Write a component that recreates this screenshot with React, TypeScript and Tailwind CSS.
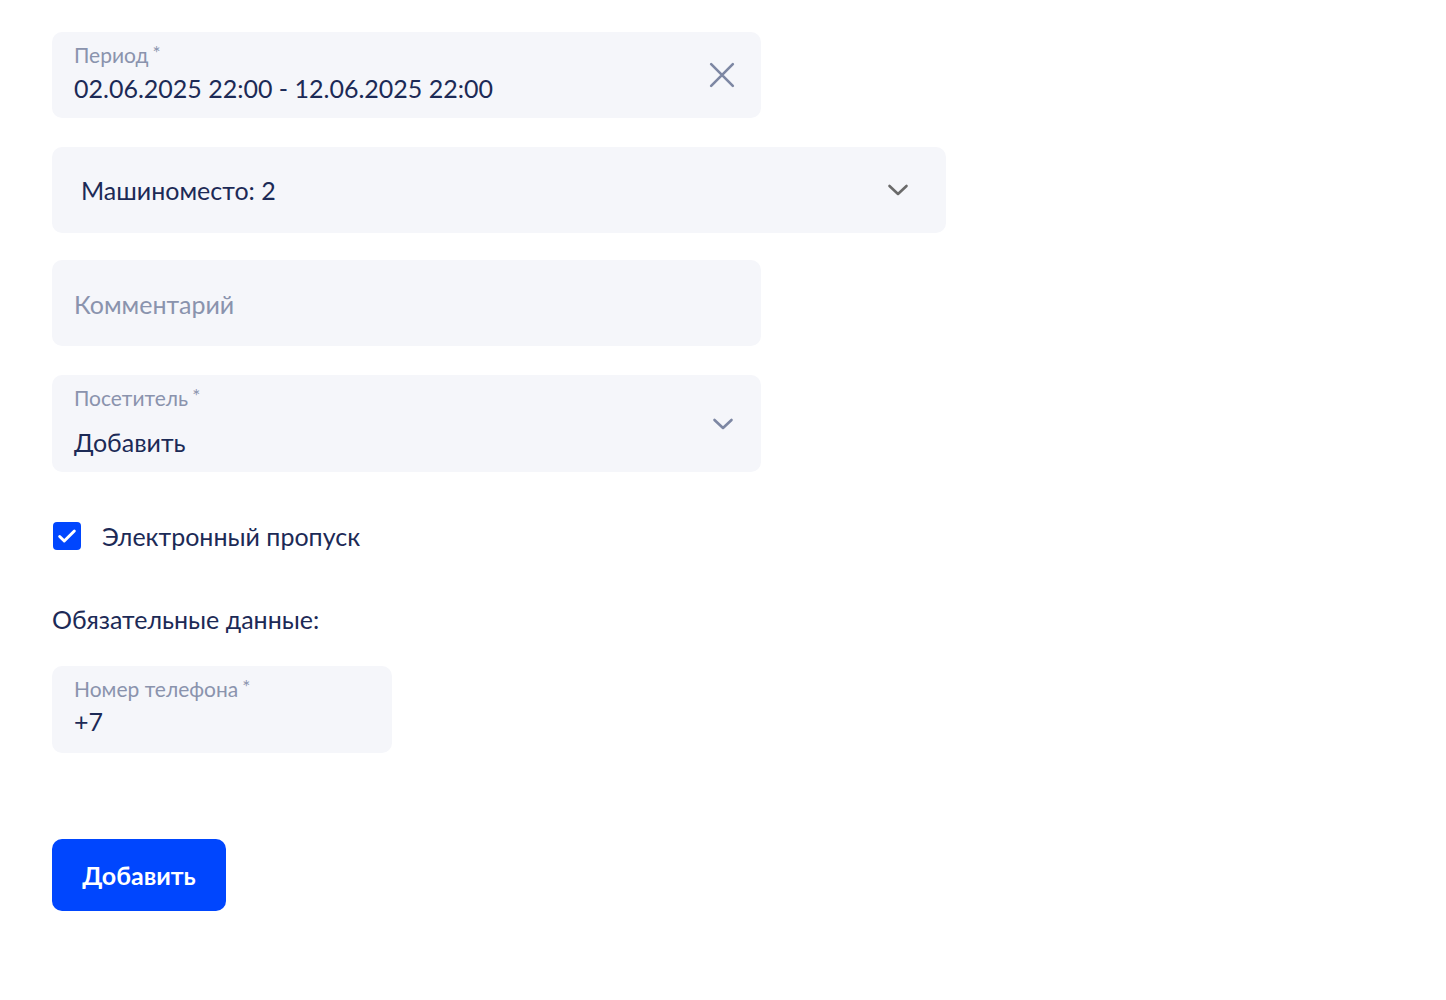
import React from "react";

const Chevron = ({ className }: { className?: string }) => (
  <svg className={className} width="24" height="24" viewBox="0 0 24 24" fill="none" stroke="currentColor" strokeWidth="2.6" strokeLinecap="round" strokeLinejoin="round">
    <path d="M3.5 8l8.5 8 8.5-8" />
  </svg>
);

const Star = () => <span className="ml-[4px] inline-block align-top text-[19px] leading-[19px] text-[#8a93ad]">*</span>;

export default function App() {
  return (
    <div className="min-h-[1000px] bg-white pl-[52px] pt-[32px] text-[#1c2a56]" style={{ fontFamily: "Lato, 'Noto Sans', sans-serif" }}>
      <div className="flex h-[86px] w-[709px] items-start justify-between rounded-[10px] bg-[#f5f6fa] pl-[22px] pr-[26px] pt-[11px]">
        <div className="flex flex-col">
          <div className="h-[24px] text-[21px] leading-[24px] text-[#8a93ad]">Период<Star /></div>
          <div className="mt-[6px] text-[25px] leading-[30px]">02.06.2025 22:00 - 12.06.2025 22:00</div>
        </div>
        <svg className="mt-[19px]" width="26" height="26" viewBox="0 0 24 24" fill="none" stroke="#7d87a3" strokeWidth="2.4" strokeLinecap="round">
          <path d="M2 2l20 20M22 2L2 22" />
        </svg>
      </div>

      <div className="mt-[29px] flex h-[86px] w-[894px] items-center justify-between rounded-[10px] bg-[#f5f6fa] pl-[29px] pr-[36px]">
        <div className="text-[25px] leading-[30px]">Машиноместо: 2</div>
        <Chevron className="text-[#6a6a6a]" />
      </div>

      <div className="mt-[27px] flex h-[86px] w-[709px] items-center rounded-[10px] bg-[#f5f6fa] pl-[22px]">
        <div className="mt-[2px] text-[25px] leading-[30px] text-[#8a93ad]">Комментарий</div>
      </div>

      <div className="mt-[29px] flex h-[97px] w-[709px] items-start justify-between rounded-[10px] bg-[#f5f6fa] pl-[22px] pr-[26px] pt-[11px]">
        <div className="flex flex-col">
          <div className="h-[24px] text-[21px] leading-[24px] text-[#8a93ad]">Посетитель<Star /></div>
          <div className="mt-[17px] text-[25px] leading-[30px]">Добавить</div>
        </div>
        <Chevron className="mt-[26px] text-[#7d87a3]" />
      </div>

      <div className="mt-[49px] flex items-center">
        <div className="ml-[1px] flex h-[28px] w-[28px] items-center justify-center rounded-[4px] bg-[#0046fe]">
          <svg width="22" height="22" viewBox="0 0 24 24" fill="none" stroke="white" strokeWidth="3.2" strokeLinecap="round" strokeLinejoin="round">
            <path d="M4 12.5l5 5L20 6.5" />
          </svg>
        </div>
        <div className="ml-[21px] text-[25px] leading-[30px]">Электронный пропуск</div>
      </div>

      <div className="mt-[53px] text-[25px] leading-[30px]">Обязательные данные:</div>

      <div className="mt-[32px] flex h-[87px] w-[340px] flex-col rounded-[10px] bg-[#f5f6fa] pl-[22px] pt-[11px]">
        <div className="h-[24px] text-[21px] leading-[24px] text-[#8a93ad]">Номер телефона<Star /></div>
        <div className="mt-[5px] text-[25px] leading-[30px]">+7</div>
      </div>

      <button className="mt-[86px] flex h-[72px] w-[174px] items-center justify-center rounded-[10px] bg-[#0046fe] text-[25px] font-bold leading-[30px] text-white">
        Добавить
      </button>
    </div>
  );
}
